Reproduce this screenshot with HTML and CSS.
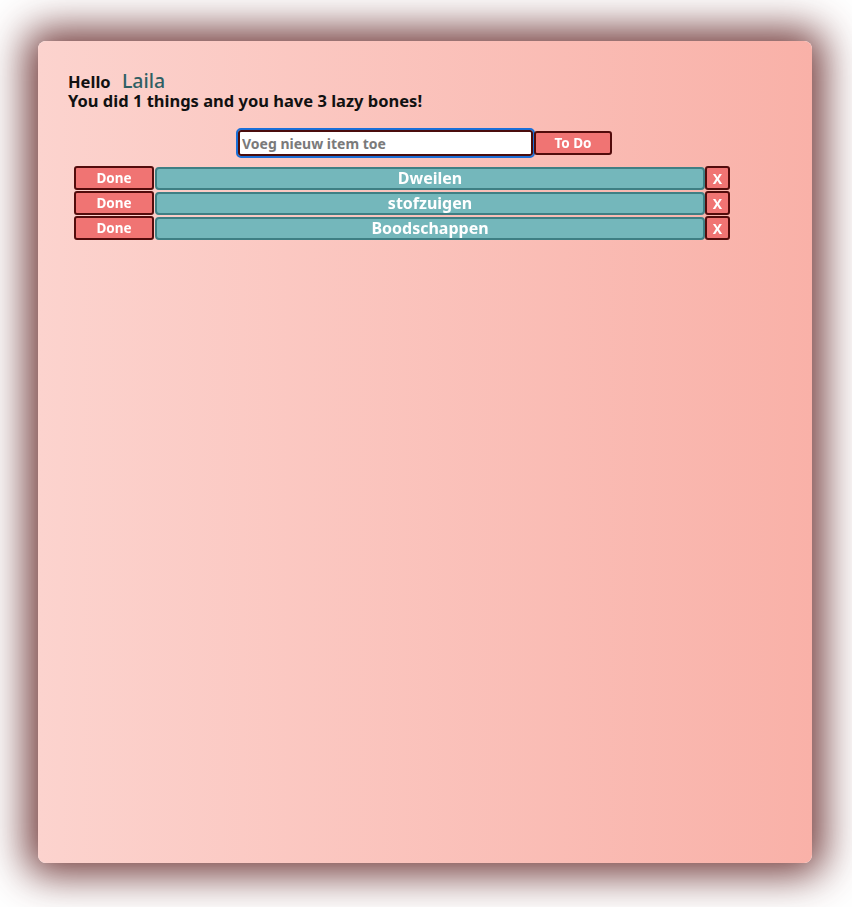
FILE: index.html
```html
<!DOCTYPE html>
<html>
<head>
<meta charset="utf-8">
<link rel="stylesheet" href="styles.css">
</head>
<body>
<div class="card">
  <div class="greeting">
    <div class="hello">Hello <span class="name">Laila</span></div>
    <div class="stats">You did 1 things and you have 3 lazy bones!</div>
  </div>
  <div class="add">
    <input class="new-item" type="text" placeholder="Voeg nieuw item toe" autofocus>
    <button class="btn todo">To Do</button>
  </div>
  <div class="list">
    <div class="row"><button class="btn done">Done</button><div class="item">Dweilen</div><button class="btn del">X</button></div>
    <div class="row"><button class="btn done">Done</button><div class="item">stofzuigen</div><button class="btn del">X</button></div>
    <div class="row"><button class="btn done">Done</button><div class="item">Boodschappen</div><button class="btn del">X</button></div>
  </div>
</div>
</body>
</html>
```
FILE: styles.css
```css
html, body { margin: 0; padding: 0; background: #fff; }
body {
  padding: 41px 40px 44px 38px;
  font-family: "Noto Sans", sans-serif;
}
.card {
  height: 822px;
  box-sizing: border-box;
  border-radius: 8px;
  background: linear-gradient(to right, #fcd3ce, #f9b1a8);
  box-shadow: 0 0 40px 12px rgba(90, 25, 25, 0.85);
  padding: 29px 30px 0 30px;
}
.greeting { font-weight: 700; font-size: 16.5px; color: #111; }
.hello { line-height: 22px; height: 22px; }
.stats { line-height: 18px; }
.name { color: #2f5f64; font-weight: 500; font-size: 19.5px; margin-left: 7px; }
.add { display: flex; justify-content: center; margin-top: 20px; align-items: center; }
.new-item {
  width: 295px; height: 26px; box-sizing: border-box;
  border: 2px solid #4a0d0d; border-radius: 3px;
  outline: 2px solid #1a6fd8; outline-offset: 0;
  font-family: inherit; font-weight: 700; font-size: 14px; padding: 0 2px;
}
.new-item::placeholder { color: #7a7a7a; }
.btn {
  font-family: inherit; font-weight: 700; color: #fff;
  background: #f07473; border: 2px solid #520c0c; border-radius: 3px;
  padding: 0; cursor: pointer;
}
.todo { width: 78px; height: 24px; font-size: 13.5px; margin-left: 1px; }
.list { margin-top: 10px; padding-left: 6px; display: flex; flex-direction: column; gap: 1px; }
.row { display: flex; align-items: center; height: 24px; }
.done { width: 80px; height: 24px; font-size: 13.5px; }
.item {
  width: 550px; height: 23px; box-sizing: border-box; margin-left: 1px;
  background: #74b7bb; border: 2px solid #3f7f84; border-radius: 4px;
  color: #fff; font-weight: 700; font-size: 16px; text-align: center; line-height: 19px;
}
.del { width: 25px; height: 24px; font-size: 14px; }
```
